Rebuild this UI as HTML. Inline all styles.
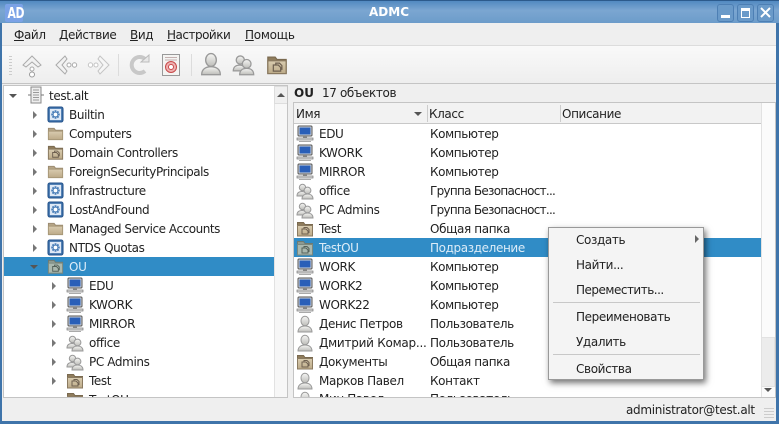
<!DOCTYPE html>
<html><head><meta charset="utf-8"><style>
html,body{margin:0;padding:0;background:#efefef}
#w{position:relative;width:779px;height:424px;overflow:hidden;background:#efefef;font:12px/19px "DejaVu Sans",sans-serif;color:#222}
.a{position:absolute}
.t{position:absolute;white-space:nowrap;height:19px;line-height:19px;letter-spacing:-.38px;margin-top:1px}
svg{position:absolute;overflow:visible}
u{text-decoration:underline}
.ar{position:absolute;width:0;height:0;border-top:4px solid transparent;border-bottom:4px solid transparent;border-left:4px solid #777}
.ad{position:absolute;width:0;height:0;border-left:4px solid transparent;border-right:4px solid transparent;border-top:4px solid #555}
.sep{position:absolute;width:1px;height:22px;top:54px;background:#dcdcdc}
</style></head><body><div id="w">
<svg width="0" height="0" style="position:absolute"><defs>
<linearGradient id="gu" x1="0" y1="0" x2="0" y2="1"><stop offset="0" stop-color="#f6f6f4"/><stop offset="1" stop-color="#bdbdb9"/></linearGradient>
<linearGradient id="gf" x1="0" y1="0" x2="0" y2="1"><stop offset="0" stop-color="#d9ccb0"/><stop offset="1" stop-color="#bcaa88"/></linearGradient>
<symbol id="pc" viewBox="0 0 18 18"><rect x="2" y="1" width="14" height="10" rx="1" fill="#d0d4da" stroke="#555"/><rect x="3.500" y="2.500" width="11" height="7" fill="#2a5fb8"/><rect x="7" y="11" width="4" height="2" fill="#888"/><rect x="1" y="13" width="16" height="2" fill="#ddd" stroke="#777" stroke-width=".7"/><rect x="3" y="16" width="12" height="1" fill="#aaa"/></symbol>
<symbol id="us" viewBox="0 0 18 18"><path d="M2 17c0-4 3-6 7-6s7 2 7 6z" fill="url(#gu)" stroke="#999"/><ellipse cx="9" cy="6" rx="4" ry="4.800" fill="url(#gu)" stroke="#999"/></symbol>
<symbol id="gr" viewBox="0 0 18 18"><path d="M1 14c0-3 2-4.500 5-4.500s5 1.500 5 4.500z" fill="url(#gu)" stroke="#999"/><circle cx="6.500" cy="5.500" r="3.200" fill="url(#gu)" stroke="#999"/><path d="M6 17c0-3.500 2.500-5 5.500-5s5.500 1.500 5.500 5z" fill="url(#gu)" stroke="#999"/><circle cx="11.500" cy="8.500" r="3.400" fill="url(#gu)" stroke="#999"/></symbol>
<symbol id="fo" viewBox="0 0 18 18"><path d="M1.500 15V3.500h6l1.500 2h7.500V15z" fill="#b6a587" stroke="#9a8a70"/><path d="M1.500 15.500V6.500h15v9z" fill="url(#gf)" stroke="#a89878"/></symbol>
<symbol id="sf" viewBox="0 0 18 18"><path d="M1.500 16V2.500h6l1.500 2h7.500V16z" fill="#8f7c5c" stroke="#7a6a50"/><path d="M1.500 16V5.500h15V16z" fill="url(#gf)" stroke="#8a7a60"/><path d="M6 14V9h4l2 2v3zM8 9V7.500h3l2 2v3h-1" fill="none" stroke="#6e6050"/></symbol>
<symbol id="ou" viewBox="0 0 18 18"><path d="M1.500 16V2.500h6l1.500 2h7.500V16z" fill="#8d9a92" stroke="#6d7a72"/><path d="M1.500 16V5.500h15V16z" fill="#aab8ae" stroke="#7a887e"/><path d="M6 14V9h4l2 2v3zM8 9V7.500h3l2 2v3h-1" fill="none" stroke="#55625a"/></symbol>
<symbol id="bi" viewBox="0 0 18 18"><rect x="1" y="1" width="16" height="16" rx="2" fill="#3a6ea8" stroke="#24528a"/><rect x="3" y="3" width="12" height="12" fill="#dfe9f6"/><path d="M9 4.500v9M4.500 9h9M5.800 5.800l6.400 6.400M12.200 5.800l-6.400 6.400" stroke="#4a7eb8" stroke-width="2"/><circle cx="9" cy="9" r="2" fill="#fff"/></symbol>
<symbol id="dm" viewBox="0 0 18 18"><rect x="4" y="1" width="10" height="16" fill="#eee" stroke="#888"/><path d="M6 4h6M6 6.500h6M6 9h6M6 11.500h6M6 14h6" stroke="#999"/><path d="M1 9h3M14 9h3" stroke="#777"/></symbol>
</defs></svg>

<!-- window frame -->
<div class="a" style="left:0;top:0;width:779px;height:23px;background:linear-gradient(#4d87bf,#7ba6d1 45%,#6c9cca)"></div>
<div class="a" style="left:0;top:0;width:779px;height:1px;background:#2c5a8c"></div>
<div class="a" style="left:0;top:23px;width:2px;height:401px;background:#3f74aa"></div>
<div class="a" style="right:0;top:23px;width:3px;height:401px;background:#3f74aa"></div>
<div class="a" style="left:0;top:421px;width:779px;height:3px;background:#3f74aa"></div>
<div class="a" style="left:5px;top:4px;width:18px;height:18px;background:#7ba2e6;border-radius:2px"></div>
<div class="a" style="left:5px;top:4px;width:18px;height:18px;color:#fff;font:bold 15px/18px 'DejaVu Sans',sans-serif;text-align:center;transform:scaleX(.72);letter-spacing:-.5px">AD</div>
<div class="t" style="left:349px;top:2px;width:80px;text-align:center;color:#fff;font-weight:bold;letter-spacing:0">ADMC</div>
<div class="a" style="left:717px;top:4px;width:15px;height:16px;border:1px solid #4d7fb4;border-radius:3px;background:#6a9ac9"></div>
<div class="a" style="left:721px;top:15px;width:9px;height:3px;background:#fff"></div>
<div class="a" style="left:737px;top:4px;width:15px;height:16px;border:1px solid #4d7fb4;border-radius:3px;background:#6a9ac9"></div>
<div class="a" style="left:741px;top:8px;width:7px;height:6px;border:1px solid #fff;border-top:3px solid #fff"></div>
<div class="a" style="left:757px;top:4px;width:15px;height:16px;border:1px solid #4d7fb4;border-radius:3px;background:#6a9ac9"></div>
<svg style="left:760px;top:7px" width="11" height="11"><path d="M1 1l9 9M10 1l-9 9" stroke="#fff" stroke-width="2"/></svg>

<!-- menu -->
<div class="t" style="left:14px;top:25px"><u>Ф</u>айл</div>
<div class="t" style="left:59px;top:25px"><u>Д</u>ействие</div>
<div class="t" style="left:130px;top:25px"><u>В</u>ид</div>
<div class="t" style="left:167px;top:25px;letter-spacing:-.5px"><u>Н</u>астройки</div>
<div class="t" style="left:245px;top:25px;letter-spacing:-.25px"><u>П</u>омощь</div>
<div class="a" style="left:2px;top:45px;width:774px;height:1px;background:#dcdcdc"></div>
<div class="a" style="left:2px;top:46px;width:774px;height:37px;background:linear-gradient(#f9f9f9,#eeeeee)"></div>
<div class="a" style="left:2px;top:83px;width:774px;height:1px;background:#c4c4c4"></div>

<!-- toolbar -->
<div class="a" style="left:9px;top:56px;width:3px;height:20px;background:repeating-linear-gradient(#ccc 0 1px,transparent 1px 3px)"></div>
<svg style="left:21px;top:54px" width="22" height="24"><path d="M11 2L2 11l3 2 6-5 6 5 3-2z" fill="#f2f2f2" stroke="#aaa"/><circle cx="11" cy="15" r="2" fill="#fff" stroke="#aaa"/><circle cx="11" cy="20.500" r="2.500" fill="#fff" stroke="#999"/></svg>
<svg style="left:54px;top:54px" width="24" height="22"><path d="M11 2L2 11l9 9 2-3-5-6 5-6z" fill="#f2f2f2" stroke="#aaa"/><circle cx="15" cy="11" r="2" fill="#fff" stroke="#aaa"/><circle cx="20.500" cy="11" r="2.200" fill="#fff" stroke="#aaa"/></svg>
<svg style="left:87px;top:54px" width="24" height="22"><path d="M13 2l9 9-9 9-2-3 5-6-5-6z" fill="#f6f6f6" stroke="#c4c4c4"/><circle cx="9" cy="11" r="2" fill="#fff" stroke="#c4c4c4"/><circle cx="3.500" cy="11" r="2.200" fill="#fff" stroke="#c4c4c4"/></svg>
<div class="sep" style="left:118px"></div>
<svg style="left:128px;top:54px" width="22" height="22"><path d="M17 17a8 8 0 1 1 0-12" fill="none" stroke="#c8c8c8" stroke-width="4"/><path d="M13 8h8V1z" fill="#e8e8e8" stroke="#bbb"/></svg>
<svg style="left:162px;top:54px" width="18" height="22"><rect x=".5" y=".5" width="17" height="21" fill="#f4f4f2" stroke="#999"/><path d="M3 3.500h12M3 6h12" stroke="#c4b0b0"/><circle cx="9" cy="13" r="5.500" fill="#eeb0b0" stroke="#c84a4a"/><circle cx="9" cy="13" r="2.500" fill="#fff" stroke="#c84a4a"/></svg>
<div class="sep" style="left:191px"></div>
<svg style="left:199px;top:52px" width="24" height="24"><use href="#us" width="24" height="24"/></svg>
<svg style="left:232px;top:53px" width="23" height="23"><use href="#gr" width="23" height="23"/></svg>
<svg style="left:266px;top:54px" width="22" height="22"><use href="#sf" width="22" height="22"/></svg>

<!-- tree -->
<div class="a" style="left:3px;top:85px;width:285px;height:313px;background:#fff;border:1px solid #c4c4c4;box-sizing:border-box;overflow:hidden">
<div class="a" style="left:0;top:171px;width:270px;height:19px;background:#308cc6"></div>
<div class="ad" style="left:5px;top:8px"></div><svg style="left:23px;top:0" width="18" height="18"><use href="#dm"/></svg><div class="t" style="left:45px;top:0">test.alt</div>
<div class="ar" style="left:29px;top:25px"></div><svg style="left:43px;top:20px" width="17" height="17"><use href="#bi"/></svg><div class="t" style="left:65px;top:19px">Builtin</div>
<div class="ar" style="left:29px;top:44px"></div><svg style="left:43px;top:39px" width="17" height="17"><use href="#fo"/></svg><div class="t" style="left:65px;top:38px">Computers</div>
<div class="ar" style="left:29px;top:63px"></div><svg style="left:43px;top:58px" width="17" height="17"><use href="#sf"/></svg><div class="t" style="left:65px;top:57px">Domain Controllers</div>
<div class="ar" style="left:29px;top:82px"></div><svg style="left:43px;top:77px" width="17" height="17"><use href="#fo"/></svg><div class="t" style="left:65px;top:76px;letter-spacing:-.45px">ForeignSecurityPrincipals</div>
<div class="ar" style="left:29px;top:101px"></div><svg style="left:43px;top:96px" width="17" height="17"><use href="#bi"/></svg><div class="t" style="left:65px;top:95px">Infrastructure</div>
<div class="ar" style="left:29px;top:120px"></div><svg style="left:43px;top:115px" width="17" height="17"><use href="#bi"/></svg><div class="t" style="left:65px;top:114px">LostAndFound</div>
<div class="ar" style="left:29px;top:139px"></div><svg style="left:43px;top:134px" width="17" height="17"><use href="#fo"/></svg><div class="t" style="left:65px;top:133px;letter-spacing:-.46px">Managed Service Accounts</div>
<div class="ar" style="left:29px;top:158px"></div><svg style="left:43px;top:153px" width="17" height="17"><use href="#bi"/></svg><div class="t" style="left:65px;top:152px">NTDS Quotas</div>
<div class="ad" style="left:26px;top:179px"></div><svg style="left:43px;top:172px" width="17" height="17"><use href="#ou"/></svg><div class="t" style="left:65px;top:171px;color:#dcecf8">OU</div>
<div class="ar" style="left:48px;top:196px"></div><svg style="left:62px;top:191px" width="18" height="18"><use href="#pc"/></svg><div class="t" style="left:85px;top:190px">EDU</div>
<div class="ar" style="left:48px;top:215px"></div><svg style="left:62px;top:210px" width="18" height="18"><use href="#pc"/></svg><div class="t" style="left:85px;top:209px">KWORK</div>
<div class="ar" style="left:48px;top:234px"></div><svg style="left:62px;top:229px" width="18" height="18"><use href="#pc"/></svg><div class="t" style="left:85px;top:228px">MIRROR</div>
<div class="ar" style="left:48px;top:253px"></div><svg style="left:62px;top:248px" width="18" height="18"><use href="#gr"/></svg><div class="t" style="left:85px;top:247px">office</div>
<div class="ar" style="left:48px;top:272px"></div><svg style="left:62px;top:267px" width="18" height="18"><use href="#gr"/></svg><div class="t" style="left:85px;top:266px">PC Admins</div>
<div class="ar" style="left:48px;top:291px"></div><svg style="left:62px;top:286px" width="18" height="18"><use href="#sf"/></svg><div class="t" style="left:85px;top:285px">Test</div>
<svg style="left:62px;top:305px" width="18" height="18"><use href="#sf"/></svg><div class="t" style="left:85px;top:304px">TestOU</div>
<div class="a" style="left:270px;top:0;width:14px;height:311px;background:#f7f7f7;border-left:1px solid #e2e2e2"></div>
<div class="a" style="left:270px;top:0;width:14px;height:18px;background:#efefef;border:1px solid #ddd;box-sizing:border-box"></div>
<div class="a" style="left:273px;top:7px;width:0;height:0;border-left:4px solid transparent;border-right:4px solid transparent;border-bottom:4px solid #555"></div>
</div>

<!-- right panel -->
<div class="t" style="left:294px;top:83px;font-weight:bold;letter-spacing:0">OU</div>
<div class="t" style="left:322px;top:83px">17 объектов</div>
<div class="a" style="left:293px;top:102px;width:483px;height:296px;background:#fff;border:1px solid #c4c4c4;box-sizing:border-box;overflow:hidden">
<div class="a" style="left:0;top:0;width:481px;height:20px;background:#f2f2f2;border-bottom:1px solid #c8c8c8"></div>
<div class="a" style="left:133px;top:2px;width:1px;height:17px;background:#ccc"></div>
<div class="a" style="left:266px;top:2px;width:1px;height:17px;background:#ccc"></div>
<div class="t" style="left:2px;top:1px">Имя</div><div class="t" style="left:135px;top:1px">Класс</div><div class="t" style="left:268px;top:1px">Описание</div>
<div class="ad" style="left:120px;top:9px"></div>
<div class="a" style="left:0;top:135px;width:467px;height:19px;background:#308cc6"></div>
<svg style="left:2px;top:22px" width="18" height="18"><use href="#pc"/></svg><div class="t" style="left:25px;top:21px">EDU</div><div class="t" style="left:136px;top:21px">Компьютер</div>
<svg style="left:2px;top:41px" width="18" height="18"><use href="#pc"/></svg><div class="t" style="left:25px;top:40px">KWORK</div><div class="t" style="left:136px;top:40px">Компьютер</div>
<svg style="left:2px;top:60px" width="18" height="18"><use href="#pc"/></svg><div class="t" style="left:25px;top:59px">MIRROR</div><div class="t" style="left:136px;top:59px">Компьютер</div>
<svg style="left:2px;top:79px" width="18" height="18"><use href="#gr"/></svg><div class="t" style="left:25px;top:78px">office</div><div class="t" style="left:136px;top:78px;letter-spacing:-.72px">Группа Безопасност...</div>
<svg style="left:2px;top:98px" width="18" height="18"><use href="#gr"/></svg><div class="t" style="left:25px;top:97px">PC Admins</div><div class="t" style="left:136px;top:97px;letter-spacing:-.72px">Группа Безопасност...</div>
<svg style="left:2px;top:117px" width="18" height="18"><use href="#sf"/></svg><div class="t" style="left:25px;top:116px">Test</div><div class="t" style="left:136px;top:116px">Общая папка</div>
<svg style="left:2px;top:136px" width="18" height="18"><use href="#ou"/></svg><div class="t" style="left:25px;top:135px;color:#dcecf8">TestOU</div><div class="t" style="left:136px;top:135px;color:#dcecf8">Подразделение</div>
<svg style="left:2px;top:155px" width="18" height="18"><use href="#pc"/></svg><div class="t" style="left:25px;top:154px">WORK</div><div class="t" style="left:136px;top:154px">Компьютер</div>
<svg style="left:2px;top:174px" width="18" height="18"><use href="#pc"/></svg><div class="t" style="left:25px;top:173px">WORK2</div><div class="t" style="left:136px;top:173px">Компьютер</div>
<svg style="left:2px;top:193px" width="18" height="18"><use href="#pc"/></svg><div class="t" style="left:25px;top:192px">WORK22</div><div class="t" style="left:136px;top:192px">Компьютер</div>
<svg style="left:2px;top:212px" width="18" height="18"><use href="#us"/></svg><div class="t" style="left:25px;top:211px">Денис Петров</div><div class="t" style="left:136px;top:211px">Пользователь</div>
<svg style="left:2px;top:231px" width="18" height="18"><use href="#us"/></svg><div class="t" style="left:25px;top:230px;letter-spacing:-.25px">Дмитрий Комар...</div><div class="t" style="left:136px;top:230px">Пользователь</div>
<svg style="left:2px;top:250px" width="18" height="18"><use href="#sf"/></svg><div class="t" style="left:25px;top:249px">Документы</div><div class="t" style="left:136px;top:249px">Общая папка</div>
<svg style="left:2px;top:269px" width="18" height="18"><use href="#us"/></svg><div class="t" style="left:25px;top:268px">Марков Павел</div><div class="t" style="left:136px;top:268px">Контакт</div>
<svg style="left:2px;top:288px" width="18" height="18"><use href="#us"/></svg><div class="t" style="left:25px;top:286px">Мин Павел</div><div class="t" style="left:136px;top:286px">Пользователь</div>
<div class="a" style="left:467px;top:0;width:14px;height:294px;background:#fbfbfb;border-left:1px solid #e2e2e2"></div>
<div class="a" style="left:467px;top:234px;width:14px;height:50px;background:#ececec;border:1px solid #e2e2e2;box-sizing:border-box"></div>
<div class="a" style="left:470px;top:285px;width:0;height:0;border-left:4px solid transparent;border-right:4px solid transparent;border-top:4px solid #555"></div>
</div>

<!-- status -->
<div class="t" style="left:626px;top:400px;letter-spacing:-.3px">administrator@test.alt</div>
<div class="a" style="left:764px;top:408px;width:10px;height:10px;background:repeating-linear-gradient(#ccc 0 1px,transparent 1px 3px)"></div>

<!-- context menu -->
<div class="a" style="left:548px;top:227px;width:156px;height:153px;background:#f4f4f4;border:1px solid #999;box-sizing:border-box;box-shadow:2px 3px 6px rgba(0,0,0,.55)">
<div class="t" style="left:27px;top:2px">Создать</div>
<div class="ar" style="left:146px;top:7px;border-left-color:#666"></div>
<div class="t" style="left:27px;top:27px">Найти...</div>
<div class="t" style="left:27px;top:52px;letter-spacing:-.5px">Переместить...</div>
<div class="a" style="left:4px;top:74px;width:147px;height:1px;background:#c8c8c8"></div>
<div class="t" style="left:27px;top:79px">Переименовать</div>
<div class="t" style="left:27px;top:104px">Удалить</div>
<div class="a" style="left:4px;top:126px;width:147px;height:1px;background:#c8c8c8"></div>
<div class="t" style="left:27px;top:131px">Свойства</div>
</div>
</div></body></html>
